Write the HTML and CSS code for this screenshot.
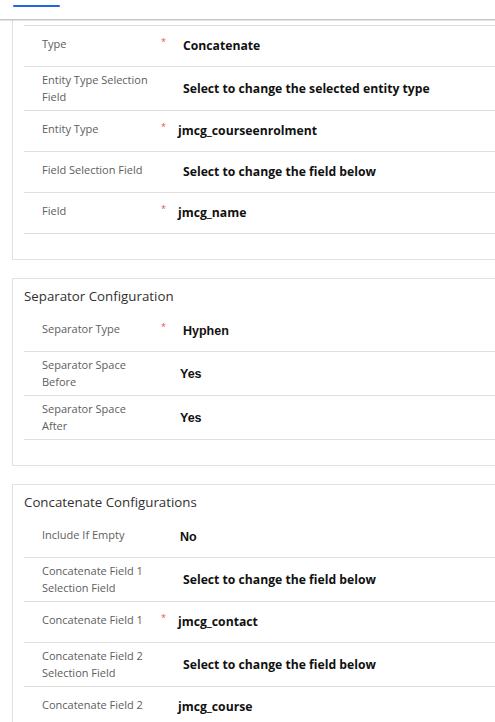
FILE: index.html
```html
<!DOCTYPE html>
<html>
<head>
<meta charset="utf-8">
<link rel="stylesheet" href="styles.css">
</head>
<body>
<div class="header"><span class="tab-indicator"></span></div>
<main class="content">
  <section class="card card-first">
    <div class="rows">
      <div class="row"><span class="label">Type</span><span class="req">*</span><span class="value v-select">Concatenate</span></div>
      <div class="row"><span class="label">Entity Type Selection Field</span><span class="req"></span><span class="value v-select">Select to change the selected entity type</span></div>
      <div class="row"><span class="label">Entity Type</span><span class="req">*</span><span class="value v-text">jmcg_courseenrolment</span></div>
      <div class="row"><span class="label">Field Selection Field</span><span class="req"></span><span class="value v-select">Select to change the field below</span></div>
      <div class="row"><span class="label">Field</span><span class="req">*</span><span class="value v-text">jmcg_name</span></div>
    </div>
  </section>

  <section class="card">
    <h2 class="card-title">Separator Configuration</h2>
    <div class="rows">
      <div class="row"><span class="label">Separator Type</span><span class="req">*</span><span class="value v-option">Hyphen</span></div>
      <div class="row"><span class="label">Separator Space Before</span><span class="req"></span><span class="value v-bool">Yes</span></div>
      <div class="row"><span class="label">Separator Space After</span><span class="req"></span><span class="value v-bool">Yes</span></div>
    </div>
  </section>

  <section class="card">
    <h2 class="card-title">Concatenate Configurations</h2>
    <div class="rows">
      <div class="row"><span class="label">Include If Empty</span><span class="req"></span><span class="value v-bool">No</span></div>
      <div class="row"><span class="label">Concatenate Field 1 Selection Field</span><span class="req"></span><span class="value v-select">Select to change the field below</span></div>
      <div class="row"><span class="label">Concatenate Field 1</span><span class="req">*</span><span class="value v-text">jmcg_contact</span></div>
      <div class="row"><span class="label">Concatenate Field 2 Selection Field</span><span class="req"></span><span class="value v-select">Select to change the field below</span></div>
      <div class="row"><span class="label">Concatenate Field 2</span><span class="req"></span><span class="value v-text">jmcg_course</span></div>
    </div>
  </section>
</main>
</body>
</html>
```
FILE: styles.css
```css
* { box-sizing: border-box; }
html, body {
  margin: 0;
  padding: 0;
  background: #fff;
  overflow: hidden;
  font-family: "Open Sans", "Noto Sans", sans-serif;
}
.header {
  height: 20px;
  background: #fff;
  border-bottom: 1px solid #c8c6c4;
  box-shadow: 0 1px 1px rgba(0,0,0,0.10);
  position: relative;
  z-index: 2;
  padding: 5px 0 0 13px;
}
.tab-indicator {
  display: block;
  width: 47px;
  height: 2px;
  background: #2266e3;
  border-radius: 1px;
}
.content {
  padding: 0 0 0 12px;
  margin-right: -20px;
  display: flex;
  flex-direction: column;
  gap: 18px;
}
.card {
  border: 1px solid #e1e1e1;
  padding: 0 0 25px 11px;
}
.card-first {
  border-top: none;
  padding-top: 5px;
}
.card-first .rows { border-top: 1px solid #e1dfdd; }
.card-title {
  margin: 0;
  padding: 7px 0 5px 0;
  font-size: 13.3px;
  line-height: 20px;
  font-weight: normal;
  color: #323130;
}
.row {
  display: grid;
  grid-template-columns: 108px 26px 1fr;
  align-items: center;
  min-height: 41px;
  padding: 5px 0 5px 18px;
  border-bottom: 1px solid #e1dfdd;
}
.label {
  font-size: 11px;
  line-height: 16.5px;
  color: #605e5c;
  min-height: 21px;
}
.req {
  align-self: center;
  color: #e0575a;
  font-size: 9px;
  line-height: 9px;
  padding-left: 11px;
  margin-top: -10px;
}
.value {
  color: #111;
  font-weight: 700;
  font-size: 12.2px;
  line-height: 18px;
}
.v-select { padding-left: 7px; }
.v-text { padding-left: 2px; }
.v-option { padding-left: 7px; font-family: "Liberation Sans", Arial, sans-serif; font-size: 12.5px; }
.v-bool { padding-left: 4px; font-family: "Liberation Sans", Arial, sans-serif; font-size: 12.5px; }
```
